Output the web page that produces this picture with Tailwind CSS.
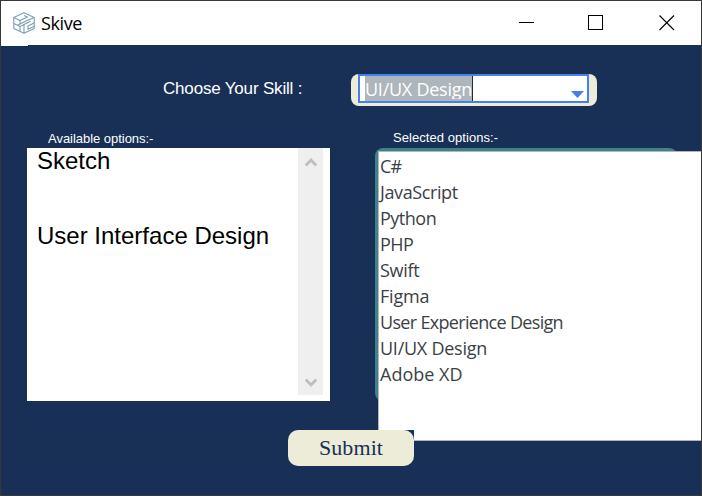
<!DOCTYPE html>
<html lang="en">
<head>
<meta charset="utf-8">
<title>Skive</title>
<script src="https://cdn.jsdelivr.net/npm/@tailwindcss/browser@4"></script>
</head>
<body class="w-[702px] h-[496px] overflow-hidden bg-[#343434]">
<div class="relative w-[702px] h-[496px] border border-[#3a3836] bg-[#183055] flex flex-col overflow-hidden font-['Liberation_Sans',sans-serif] text-white">
  <header class="h-11 shrink-0 bg-white text-black flex items-center justify-between">
    <div class="flex items-center gap-[6px] pl-3">
      <svg class="w-[22px] h-[22px]" viewBox="0 0 22 22" fill="none" stroke="#7d9eb1" stroke-width="1.1" stroke-linejoin="round">
        <path d="M11 .8 21.2 5.5v11L11 21.2.8 16.5v-11z"/>
        <path d="M.8 5.5 7 8.5 14.5 5 11 3.4M7 8.5v3.2M.8 11.5 4.5 13.2 15.5 7.8M4.5 13.2 7 14.5v4.8M7 14.5 17.5 9.2M21.2 5.5 15.5 8M21.2 11 15 14v3.2l6.2-2.9M11 12.5v8.7"/>
      </svg>
      <span class="font-['Open_Sans',sans-serif] text-[18px] tracking-[-0.4px] leading-6">Skive</span>
    </div>
    <div class="flex items-center pr-[26px] pb-px">
      <svg class="w-[15px] h-[15px] mr-[54px]" viewBox="0 0 15 15" shape-rendering="crispEdges"><path d="M0 7.5h15" stroke="#000"/></svg>
      <svg class="w-[15px] h-[15px] mr-[56px]" viewBox="0 0 15 15" fill="none" stroke="#000" shape-rendering="crispEdges"><path d="M.5 .5h14v14H.5z"/></svg>
      <svg class="w-4 h-4" viewBox="0 0 16 16" stroke="#000" stroke-width="1.1"><path d="M.5 .5l14.5 14.5M15 .5L.5 15"/></svg>
    </div>
  </header>

  <div class="w-[27px] h-px bg-white shrink-0"></div>

  <main class="flex flex-col pt-7">
    <div class="flex h-8">
      <label class="w-[350px] pl-[162px] pt-[3px] text-[17px] leading-6 tracking-[-0.18px] whitespace-nowrap">Choose Your Skill :</label>
      <div class="w-[246px] h-8 rounded-[8px] bg-[#ececd9] pl-[7px]">
        <div class="w-[231px] h-[29px] border-2 border-[#4581ea] bg-white flex justify-between pl-[5px] pr-[3px]">
          <div class="h-[25px] w-[108px] bg-[#adb5bd] border-r border-[#252b35]">
            <span class="block h-[23px] font-['Open_Sans',sans-serif] text-[18px] tracking-[-0.25px] leading-[27px] overflow-hidden whitespace-nowrap">UI/UX Design</span>
          </div>
          <svg class="w-[13px] h-[7px] mt-[15px]" viewBox="0 0 13 7"><path d="M0 0h13L6.5 7z" fill="#4581ea"/></svg>
        </div>
      </div>
    </div>

    <div class="flex pl-[26px] pt-[22px]">
      <section class="w-[348px]">
        <h2 class="h-5 pl-[21px] pt-px text-[13px] leading-5 tracking-[-0.03px]">Available options:-</h2>
        <div class="w-[303px] h-[253px] bg-white text-black flex justify-between pl-[10px] pr-[7px]">
          <ul class="text-[24px] leading-[26px] whitespace-nowrap">
            <li class="h-[75px]">Sketch</li>
            <li>User Interface Design</li>
          </ul>
          <div class="w-[25px] h-[247px] bg-[#efefef] flex flex-col items-center justify-between pt-[10px] pb-[8px]">
            <svg class="w-3 h-[9px]" viewBox="0 0 12 9" fill="none" stroke="#bfbfbf" stroke-width="2.8"><path d="M.8 7.5 6 2l5.2 5.5"/></svg>
            <svg class="w-3 h-[9px]" viewBox="0 0 12 9" fill="none" stroke="#bfbfbf" stroke-width="2.8"><path d="M.8 1.5 6 7l5.2-5.5"/></svg>
          </div>
        </div>
      </section>
      <section class="w-[302px]">
        <h2 class="h-5 pl-[18px] text-[13px] leading-5 tracking-[0.06px]">Selected options:-</h2>
        <div class="h-[253px] rounded-[8px] bg-[#3c838d]"></div>
      </section>
    </div>

    <div class="relative z-20 ml-[287px] mt-[29px] w-[126px] h-9 bg-[#183055]">
      <button class="block w-full h-full rounded-[10px] bg-[#ececd9] text-[#183055] font-['Liberation_Serif',serif] text-[22px] leading-9 tracking-[0.1px]">Submit</button>
    </div>
  </main>

  <ul class="absolute z-10 left-[377px] top-[150px] w-[323px] h-[290px] bg-white border border-r-0 border-[#b5b5b5] pt-px pl-px text-[#3b3f46] font-['Open_Sans',sans-serif] text-[18px] leading-[26px] whitespace-nowrap">
    <li class="tracking-[-0.8px]">C#</li>
    <li class="tracking-[-0.4px]">JavaScript</li>
    <li class="tracking-[-0.5px]">Python</li>
    <li class="tracking-[-0.6px]">PHP</li>
    <li class="tracking-[-0.3px]">Swift</li>
    <li class="tracking-[-0.2px]">Figma</li>
    <li class="tracking-[-0.68px]">User Experience Design</li>
    <li class="tracking-[-0.25px]">UI/UX Design</li>
    <li>Adobe XD</li>
  </ul>
</div>
</body>
</html>
